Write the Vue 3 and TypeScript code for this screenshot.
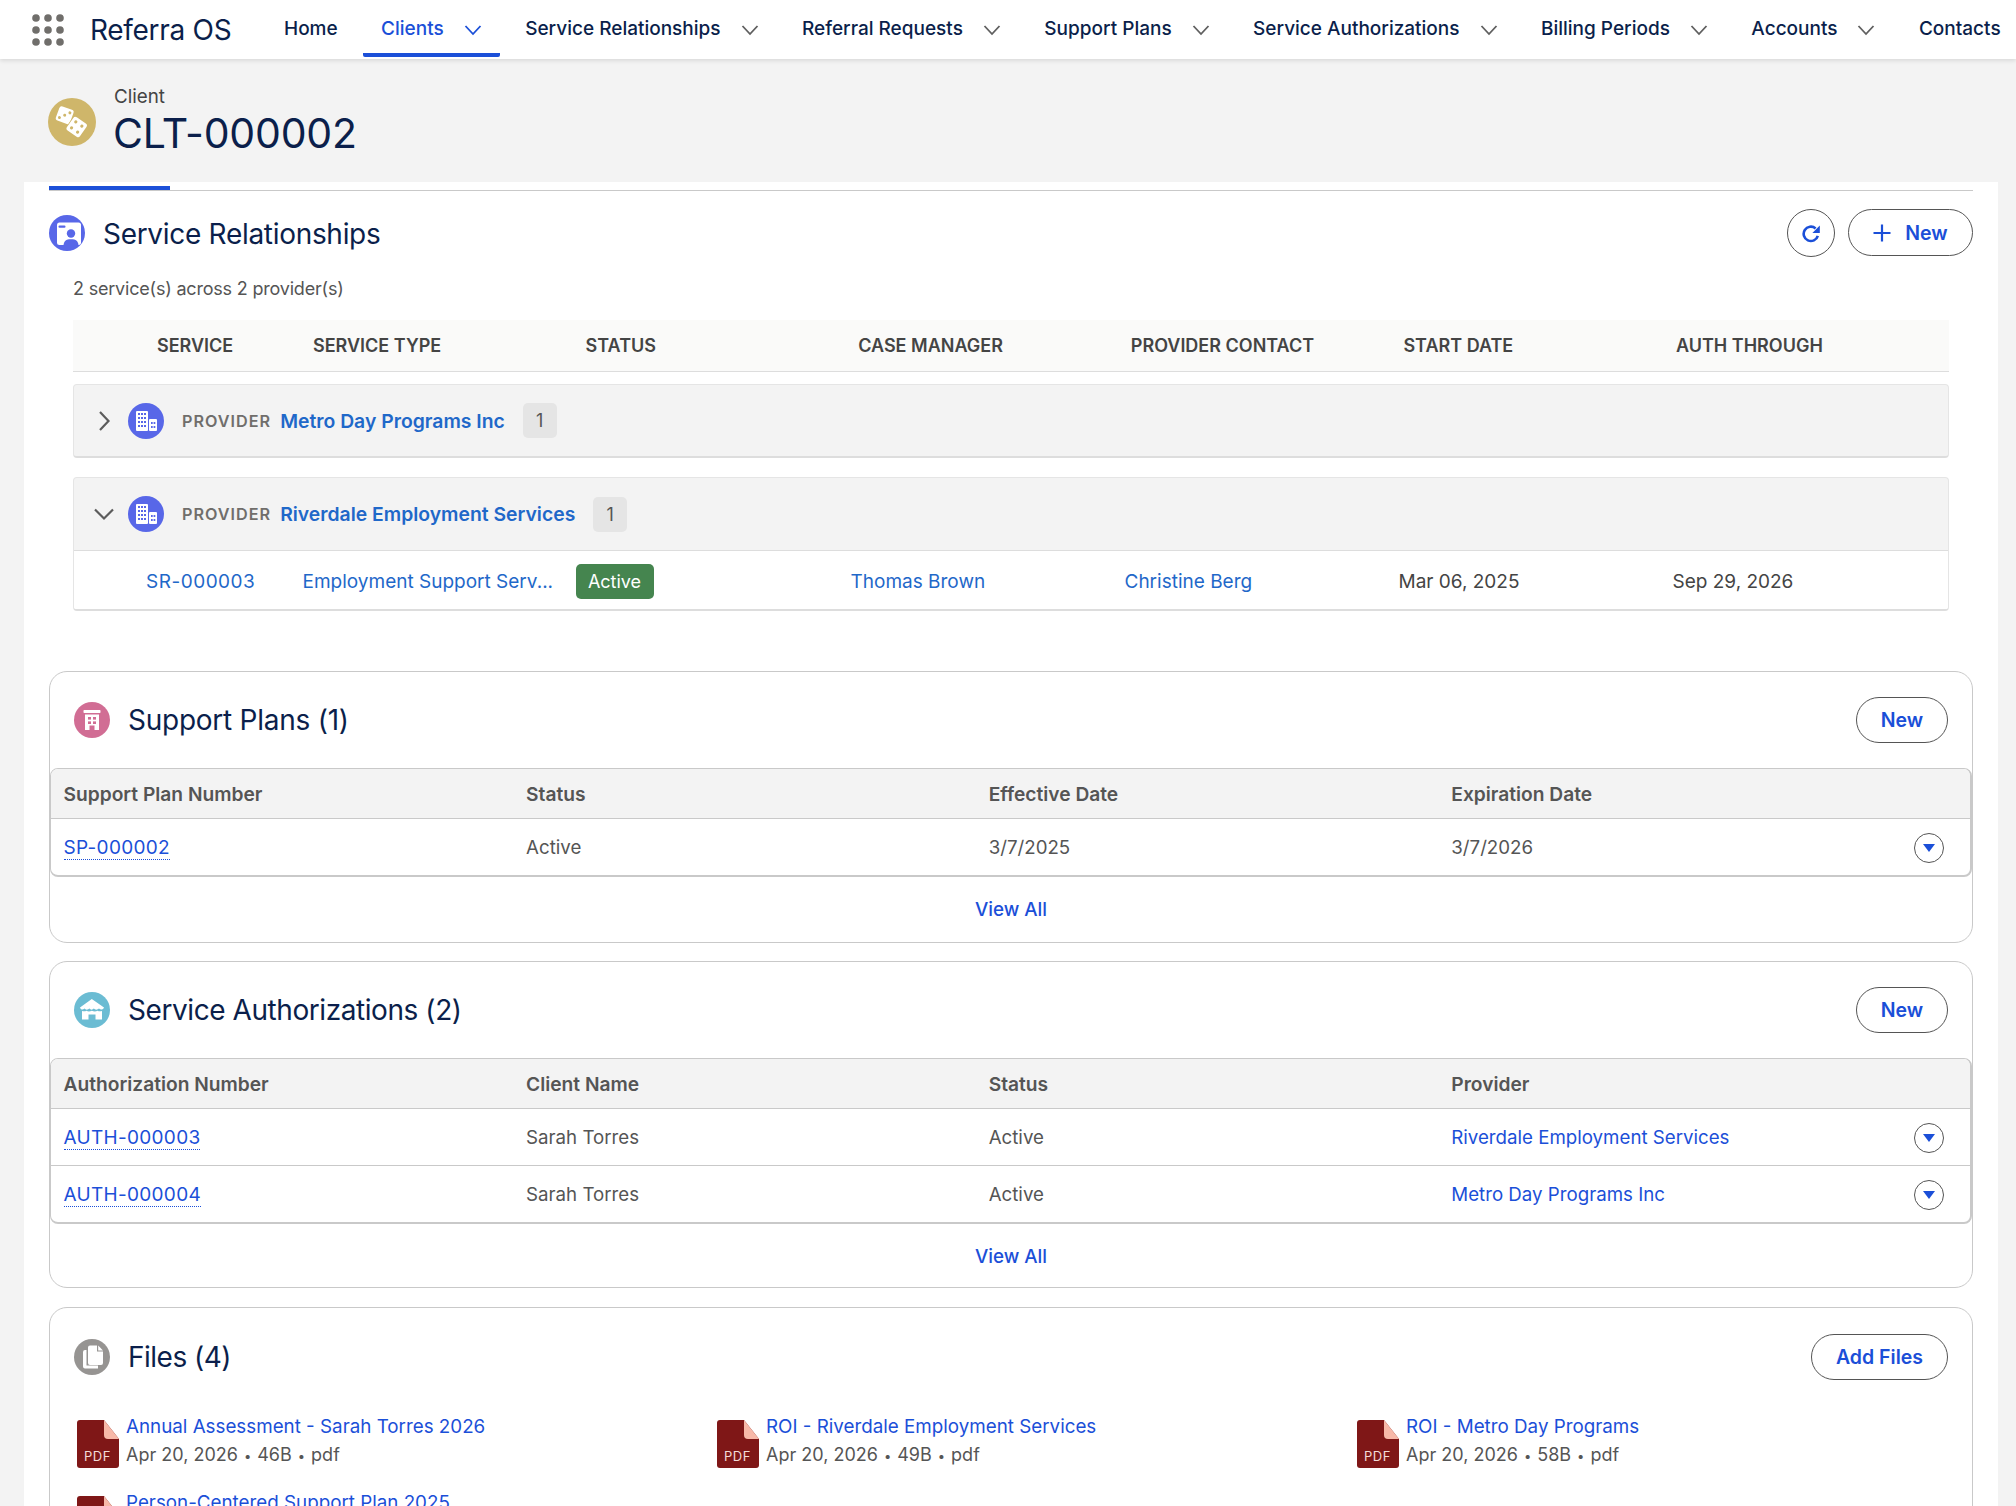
<script setup lang="ts">
const navItems = [
  { label: 'Home', chevron: false },
  { label: 'Clients', chevron: true, active: true },
  { label: 'Service Relationships', chevron: true },
  { label: 'Referral Requests', chevron: true },
  { label: 'Support Plans', chevron: true },
  { label: 'Service Authorizations', chevron: true },
  { label: 'Billing Periods', chevron: true },
  { label: 'Accounts', chevron: true },
  { label: 'Contacts', chevron: false },
]
const srColumns = ['Service', 'Service Type', 'Status', 'Case Manager', 'Provider Contact', 'Start Date', 'Auth Through']
const authRows = [
  { id: 'AUTH-000003', client: 'Sarah Torres', status: 'Active', provider: 'Riverdale Employment Services' },
  { id: 'AUTH-000004', client: 'Sarah Torres', status: 'Active', provider: 'Metro Day Programs Inc' },
]
const files = [
  { name: 'Annual Assessment - Sarah Torres 2026', size: '46B' },
  { name: 'ROI - Riverdale Employment Services', size: '49B' },
  { name: 'ROI - Metro Day Programs', size: '58B' },
  { name: 'Person-Centered Support Plan 2025', size: '52B' },
]
</script>

<template>
  <div class="app">
    <header class="nav">
      <svg class="waffle" viewBox="0 0 32 32" width="32" height="32">
        <g fill="#706e6b">
          <circle v-for="n in 9" :key="n" :cx="4 + ((n - 1) % 3) * 12" :cy="4 + Math.floor((n - 1) / 3) * 12" r="3.8" />
        </g>
      </svg>
      <span class="brand">Referra OS</span>
      <nav class="nav-items">
        <a v-for="item in navItems" :key="item.label" class="nav-item" :class="{ active: item.active }">
          {{ item.label }}
          <svg v-if="item.chevron" class="nav-chev" viewBox="0 0 18 12" width="18" height="12">
            <path d="M1.5 2 L9 10 L16.5 2" fill="none" stroke="currentColor" stroke-width="1.8" />
          </svg>
        </a>
      </nav>
    </header>

    <div class="page-head">
      <span class="round r48 gold">
        <svg viewBox="0 0 48 48" width="48" height="48">
          <g transform="rotate(20 16.7 17.2)">
            <rect x="9.2" y="9.7" width="15" height="15" rx="2.5" fill="#fff" />
            <circle cx="12.6" cy="21.2" r="1.5" fill="#cfb66a" /><circle cx="16.7" cy="17.2" r="1.5" fill="#cfb66a" /><circle cx="20.8" cy="13.2" r="1.5" fill="#cfb66a" />
          </g>
          <g transform="rotate(35 28.7 29)">
            <rect x="20" y="20.5" width="17.4" height="17" rx="2.5" fill="#cfb66a" />
            <rect x="20.7" y="21" width="16" height="16" rx="2.5" fill="#fff" />
            <circle cx="25" cy="25.3" r="1.6" fill="#cfb66a" /><circle cx="32.4" cy="25.3" r="1.6" fill="#cfb66a" /><circle cx="25" cy="32.7" r="1.6" fill="#cfb66a" /><circle cx="32.4" cy="32.7" r="1.6" fill="#cfb66a" />
          </g>
        </svg>
      </span>
      <div class="page-titles">
        <div class="page-kicker">Client</div>
        <h1 class="page-title">CLT-000002</h1>
      </div>
    </div>

    <main class="panel">
      <div class="tabs"><span class="tab-mark"></span></div>

      <section class="sr">
        <div class="sr-head">
          <span class="round r36 indigo">
            <svg viewBox="0 0 36 36" width="36" height="36">
              <rect x="8" y="7.5" width="24" height="22.5" rx="2.5" fill="#fff" />
              <rect x="9.5" y="10.5" width="7" height="2.2" rx="1" fill="#5867e8" />
              <circle cx="22" cy="18.5" r="4.2" fill="#5867e8" />
              <path d="M14.5 31 C14.5 26 17 24.2 22 24.2 C27 24.2 29.5 26 29.5 31 Z" fill="#5867e8" />
            </svg>
          </span>
          <h2 class="sr-title">Service Relationships</h2>
          <div class="sr-actions">
            <button class="icon-btn">
              <svg viewBox="0 0 20 20" width="20" height="20">
                <path d="M16.8 12.8 A7.2 7.2 0 1 1 14.6 5.4" fill="none" stroke="#1b4fd8" stroke-width="2.6" />
                <path d="M18.8 2.4 V10 H11.4 Z" fill="#1b4fd8" />
              </svg>
            </button>
            <button class="pill new-plus">
              <svg viewBox="0 0 18 18" width="18" height="18">
                <path d="M9 .5 V17.5 M.5 9 H17.5" stroke="#1b4fd8" stroke-width="2.2" fill="none" />
              </svg>
              New
            </button>
          </div>
        </div>
        <p class="sr-sub">2 service(s) across 2 provider(s)</p>

        <div class="sr-body">
          <div class="sr-cols">
            <span v-for="c in srColumns" :key="c">{{ c }}</span>
          </div>

          <div class="group">
            <div class="group-head">
              <svg class="twist" viewBox="0 0 20 20" width="20" height="20">
                <path d="M6 1 L14.5 10 L6 19" fill="none" stroke="#5c5c5c" stroke-width="2.2" />
              </svg>
              <span class="round r36 indigo">
                <svg viewBox="0 0 36 36" width="36" height="36">
                  <g fill="#fff">
                    <rect x="8" y="8" width="12" height="20" rx="1" /><rect x="21" y="16" width="8" height="12" rx="1" />
                  </g>
                  <g fill="#5867e8">
                    <rect x="10" y="10" width="2" height="2" /><rect x="13" y="10" width="2" height="2" /><rect x="16" y="10" width="2" height="2" />
                    <rect x="10" y="14" width="2" height="2" /><rect x="13" y="14" width="2" height="2" /><rect x="16" y="14" width="2" height="2" />
                    <rect x="10" y="18" width="2" height="2" /><rect x="13" y="18" width="2" height="2" /><rect x="16" y="18" width="2" height="2" />
                    <rect x="10" y="22" width="2" height="2" /><rect x="13" y="22" width="2" height="2" /><rect x="16" y="22" width="2" height="2" />
                    <rect x="23" y="19" width="1.7" height="2" /><rect x="25.6" y="19" width="1.7" height="2" /><rect x="23" y="23" width="1.7" height="2" /><rect x="25.6" y="23" width="1.7" height="2" />
                  </g>
                </svg>
              </span>
              <span class="prov-label">Provider</span>
              <a class="prov-name">Metro Day Programs Inc</a>
              <span class="count">1</span>
            </div>
          </div>

          <div class="group open">
            <div class="group-head">
              <svg class="twist" viewBox="0 0 20 20" width="20" height="20">
                <path d="M1 5.5 L10 14.5 L19 5.5" fill="none" stroke="#5c5c5c" stroke-width="2.2" />
              </svg>
              <span class="round r36 indigo">
                <svg viewBox="0 0 36 36" width="36" height="36">
                  <g fill="#fff">
                    <rect x="8" y="8" width="12" height="20" rx="1" /><rect x="21" y="16" width="8" height="12" rx="1" />
                  </g>
                  <g fill="#5867e8">
                    <rect x="10" y="10" width="2" height="2" /><rect x="13" y="10" width="2" height="2" /><rect x="16" y="10" width="2" height="2" />
                    <rect x="10" y="14" width="2" height="2" /><rect x="13" y="14" width="2" height="2" /><rect x="16" y="14" width="2" height="2" />
                    <rect x="10" y="18" width="2" height="2" /><rect x="13" y="18" width="2" height="2" /><rect x="16" y="18" width="2" height="2" />
                    <rect x="10" y="22" width="2" height="2" /><rect x="13" y="22" width="2" height="2" /><rect x="16" y="22" width="2" height="2" />
                    <rect x="23" y="19" width="1.7" height="2" /><rect x="25.6" y="19" width="1.7" height="2" /><rect x="23" y="23" width="1.7" height="2" /><rect x="25.6" y="23" width="1.7" height="2" />
                  </g>
                </svg>
              </span>
              <span class="prov-label">Provider</span>
              <a class="prov-name">Riverdale Employment Services</a>
              <span class="count">1</span>
            </div>
            <div class="sr-row">
              <a class="sr-link">SR-000003</a>
              <a class="sr-link">Employment Support Serv...</a>
              <span><span class="active-badge">Active</span></span>
              <a class="sr-link">Thomas Brown</a>
              <a class="sr-link">Christine Berg</a>
              <span>Mar 06, 2025</span>
              <span>Sep 29, 2026</span>
            </div>
          </div>
        </div>
      </section>

      <section class="card first-card">
        <div class="card-head">
          <span class="round r36 pink">
            <svg viewBox="0 0 36 36" width="36" height="36">
              <rect x="9.5" y="8" width="17" height="3" rx=".8" fill="#fff" />
              <path d="M11 12.5 H25 V28 H20.5 V23.5 H15.5 V28 H11 Z" fill="#fff" />
              <g fill="#d16d94">
                <rect x="14" y="15" width="3" height="2.6" /><rect x="19" y="15" width="3" height="2.6" />
                <rect x="14" y="19.4" width="3" height="2.6" /><rect x="19" y="19.4" width="3" height="2.6" />
              </g>
            </svg>
          </span>
          <h2 class="card-title">Support Plans (1)</h2>
          <button class="pill small-pill">New</button>
        </div>
        <div class="rl-table">
          <div class="rl-row rl-header">
            <span>Support Plan Number</span><span>Status</span><span>Effective Date</span><span>Expiration Date</span>
          </div>
          <div class="rl-row">
            <a class="rec-link">SP-000002</a><span>Active</span><span>3/7/2025</span><span>3/7/2026</span>
            <button class="menu-btn"><span class="tri"></span></button>
          </div>
        </div>
        <a class="view-all">View All</a>
      </section>

      <section class="card auth-card">
        <div class="card-head">
          <span class="round r36 teal">
            <svg viewBox="0 0 36 36" width="36" height="36">
              <path d="M17.8 7 L30 15.5 C29 18 26.5 18 25 16.6 C23.5 18 21 18 19.8 16.6 C18.6 18 16.4 18 15.4 16.6 C14 18 11.5 18 10.4 16.6 C9 18 6.8 18 6 15.5 Z" fill="#fff" />
              <path d="M8 19 C10 19.6 11.2 19.4 12.4 18.8 C14 19.6 15.8 19.6 17.8 18.8 C19.8 19.6 22 19.6 23.4 18.8 C25 19.4 26 19.6 28 19 V27.5 H21.5 V22.5 H14.5 V27.5 H8 Z" fill="#fff" />
            </svg>
          </span>
          <h2 class="card-title">Service Authorizations (2)</h2>
          <button class="pill small-pill">New</button>
        </div>
        <div class="rl-table">
          <div class="rl-row rl-header">
            <span>Authorization Number</span><span>Client Name</span><span>Status</span><span>Provider</span>
          </div>
          <div v-for="row in authRows" :key="row.id" class="rl-row">
            <a class="rec-link">{{ row.id }}</a><span>{{ row.client }}</span><span>{{ row.status }}</span><a class="plain-link">{{ row.provider }}</a>
            <button class="menu-btn"><span class="tri"></span></button>
          </div>
        </div>
        <a class="view-all">View All</a>
      </section>

      <section class="card files-card">
        <div class="card-head">
          <span class="round r36 grey">
            <svg viewBox="0 0 36 36" width="36" height="36">
              <path d="M12.5 11 V26.5 H24 V29.5 H11 A2 2 0 0 1 9 27.5 V13 A2 2 0 0 1 11 11 Z" fill="#fff" />
              <path d="M16 6.5 H23 V12.5 H29 V24 A2 2 0 0 1 27 26 H16 A2 2 0 0 1 14 24 V8.5 A2 2 0 0 1 16 6.5 Z" fill="#fff" />
              <path d="M24.2 6.5 L29 11.4 H24.2 Z" fill="#fff" />
            </svg>
          </span>
          <h2 class="card-title">Files (4)</h2>
          <button class="pill files-pill">Add Files</button>
        </div>
        <div class="file-grid">
          <div v-for="f in files" :key="f.name" class="file">
            <span class="pdf">
              <svg viewBox="0 0 42 48" width="42" height="48">
                <path d="M3 0 H27 L42 19 V45 A3 3 0 0 1 39 48 H3 A3 3 0 0 1 0 45 V3 A3 3 0 0 1 3 0 Z" fill="#7f1717" />
                <path d="M27 0 L42 19 H31 A4 4 0 0 1 27 15 Z" fill="#f7b9a9" />
              </svg>
              <span class="pdf-text">PDF</span>
            </span>
            <div class="file-info">
              <a class="file-name">{{ f.name }}</a>
              <div class="file-meta">Apr 20, 2026<i>•</i>{{ f.size }}<i>•</i>pdf</div>
            </div>
          </div>
        </div>
      </section>
    </main>
  </div>
</template>

<style>
html, body { margin: 0; background: #f3f3f3; }
</style>

<style scoped>
.app { width: 2016px; height: 1506px; overflow: hidden; background: #f3f3f3; font-family: Inter, "Noto Sans", sans-serif; font-size: 18.7px; color: #444; }
a { text-decoration: none; }
h1, h2, p { margin: 0; font-weight: 400; }
button { font-family: inherit; cursor: pointer; background: #fff; }
.round { display: flex; flex: none; border-radius: 50%; overflow: hidden; }
.r48 { width: 48px; height: 48px; }
.r36 { width: 36px; height: 36px; }
.gold { background: #cfb66a; }
.indigo { background: #5867e8; }
.pink { background: #d16d94; }
.teal { background: #6bbcd3; }
.grey { background: #969492; }

.nav { position: relative; z-index: 2; height: 59px; display: flex; align-items: center; background: #fff; box-shadow: 0 2px 4px rgba(0,0,0,.1); color: #0b1f4b; white-space: nowrap; overflow: hidden; }
.waffle { margin-left: 32px; flex: none; }
.brand { margin-left: 26px; font-size: 28px; width: 176px; flex: none; letter-spacing: -.3px; padding-top: 1px; }
.nav-items { display: flex; gap: 7.45px; height: 59px; }
.nav-item { display: flex; align-items: center; height: 57px; padding: 3px 18px 0; box-sizing: border-box; font-weight: 500; font-size: 19px; color: #0b1f4b; border-bottom: 4px solid transparent; border-radius: 0 0 2px 2px; }
.nav-item.active { color: #1b4fd8; border-bottom-color: #1b4fd8; }
.nav-chev { margin-left: 20px; margin-top: 3px; color: #5f5f5f; }
.nav-item.active .nav-chev { color: #1b4fd8; }

.page-head { height: 123px; padding-left: 48px; display: flex; align-items: flex-start; box-sizing: border-box; }
.page-head .round { margin-top: 38.5px; }
.page-titles { margin-left: 18px; padding-top: 26px; }
.page-kicker { font-size: 18.8px; line-height: 23px; color: #444; }
.page-title { font-size: 41px; line-height: 48px; margin-top: 1px; margin-left: -1px; color: #0b1f4b; letter-spacing: -.2px; }

.panel { margin-left: 24px; width: 1974px; box-sizing: border-box; padding: 0 25px; background: #fff; height: 1324px; }
.tabs { height: 9px; box-sizing: border-box; border-bottom: 1.5px solid #c9c9c9; padding-top: 4px; }
.tab-mark { display: block; width: 121px; height: 4px; background: #1b4fd8; }

.sr-head { display: flex; align-items: center; margin-top: 18px; height: 48px; }
.sr-title { margin-left: 18px; font-size: 28px; color: #0b1f4b; letter-spacing: -.3px; padding-top: 1px; }
.sr-actions { margin-left: auto; display: flex; gap: 13px; }
.icon-btn { width: 48px; height: 48px; border-radius: 50%; border: 1px solid #555; display: flex; align-items: center; justify-content: center; padding: 0; }
.pill { border: 1px solid #555; border-radius: 24px; color: #1b4fd8; font-size: 19.5px; font-weight: 600; height: 47px; padding: 0; display: flex; align-items: center; justify-content: center; }
.new-plus { width: 125px; gap: 14px; }
.sr-sub { margin-top: 20px; margin-left: 24px; font-size: 18px; line-height: 24px; letter-spacing: -.2px; color: #555; }
.sr-body { margin: 19px 24px 0; }
.sr-cols { height: 52px; box-sizing: border-box; border-bottom: 1.5px solid #ddd; background: #fafaf9; display: grid; grid-template-columns: 156px repeat(6, 272.6px); padding-left: 84px; align-items: center; font-weight: 600; font-size: 18px; text-transform: uppercase; color: #444; }
.group { margin-top: 19px; border: 1px solid #e5e5e5; border-bottom: 2px solid #ddd; border-radius: 4px; background: #f3f3f3; overflow: hidden; }
.sr-cols + .group { margin-top: 12px; }
.group-head { height: 71px; display: flex; align-items: center; padding-left: 20px; box-sizing: border-box; }
.group.open .group-head { height: 73px; border-bottom: 1px solid #ddd; }
.twist { flex: none; }
.group-head .round { margin-left: 14px; }
.prov-label { margin-left: 18px; text-transform: uppercase; font-size: 16.2px; font-weight: 600; letter-spacing: 1px; color: #706e6b; }
.prov-name { margin-left: 9px; font-size: 19.35px; font-weight: 600; color: #1f68c9; }
.count { margin-left: 18px; min-width: 34px; height: 35px; background: #e5e5e5; border-radius: 5px; display: flex; align-items: center; justify-content: center; color: #555; font-size: 18px; }
.sr-row { height: 58px; padding-top: 2px; box-sizing: border-box; background: #fff; display: grid; grid-template-columns: 156.5px repeat(6, 274px); padding-left: 72px; align-items: center; color: #444; font-size: 19px; }
.sr-row a:first-child { letter-spacing: .5px; }
.sr-link { color: #1f68c9; }
.active-badge { display: inline-flex; align-items: center; justify-content: center; width: 78px; height: 35px; border-radius: 5px; background: #45854f; color: #fff; margin-left: -1px; font-size: 18px; }

.card { margin-top: 18px; border: 1.5px solid #c9c9c9; border-radius: 18px; background: #fff; box-sizing: border-box; }
.first-card { margin-top: 60px; height: 272px; }
.auth-card { height: 327px; }
.files-card { height: 400px; margin-top: 19px; }
.card-head { display: flex; align-items: center; height: 46px; margin-top: 25px; padding: 0 24px; }
.files-card .card-head { margin-top: 26px; }
.card-title { margin-left: 18px; font-size: 28px; color: #0b1f4b; letter-spacing: -.25px; }
.auth-card .card-title { letter-spacing: -.43px; }
.files-card .card-title { letter-spacing: -.5px; }
.small-pill { margin-left: auto; width: 92px; height: 46px; }
.files-pill { margin-left: auto; width: 137px; height: 46px; }

.rl-table { margin-top: 25px; border: 1px solid #c9c9c9; border-right-width: 2px; border-bottom-width: 2px; border-radius: 8px; overflow: hidden; }
.rl-row { display: grid; grid-template-columns: repeat(4, 462.6px) 30px; padding-left: 12.5px; height: 56px; align-items: center; border-top: 1px solid #c9c9c9; color: #555; }
.rl-row.rl-header { height: 49px; border-top: 0; background: #f3f3f3; font-weight: 600; font-size: 19.2px; }
.rec-link { color: #1b4fd8; border-bottom: 1px dotted #1b4fd8; justify-self: start; line-height: 22px; font-size: 19px; letter-spacing: .3px; margin-top: 2px; }
.plain-link { color: #1b4fd8; }
.menu-btn { width: 30px; height: 30px; border-radius: 50%; border: 1px solid #555; padding: 0; display: flex; align-items: center; justify-content: center; margin-top: 1px; }
.tri { width: 0; height: 0; border-left: 6.5px solid transparent; border-right: 6.5px solid transparent; border-top: 8px solid #1b4fd8; }
.view-all { display: block; text-align: center; margin-top: 20px; line-height: 26px; color: #1b4fd8; font-weight: 500; font-size: 18.8px; }

.file-grid { display: grid; grid-template-columns: repeat(3, 640px); row-gap: 27px; margin: 40px 0 0 27px; }
.file { display: flex; gap: 7px; }
.pdf { position: relative; width: 42px; height: 48px; flex: none; }
.pdf-text { position: absolute; left: 7px; bottom: 4px; font-size: 13px; letter-spacing: .5px; color: #f4dcd8; }
.file-info { margin-top: -6px; }
.file-name { color: #1b4fd8; font-size: 18.8px; line-height: 26px; display: block; }
.file-meta { color: #555; font-size: 18px; line-height: 26px; margin-top: 2px; }
.file-meta i { font-style: normal; margin: 0 6px; font-size: 13px; }
</style>
